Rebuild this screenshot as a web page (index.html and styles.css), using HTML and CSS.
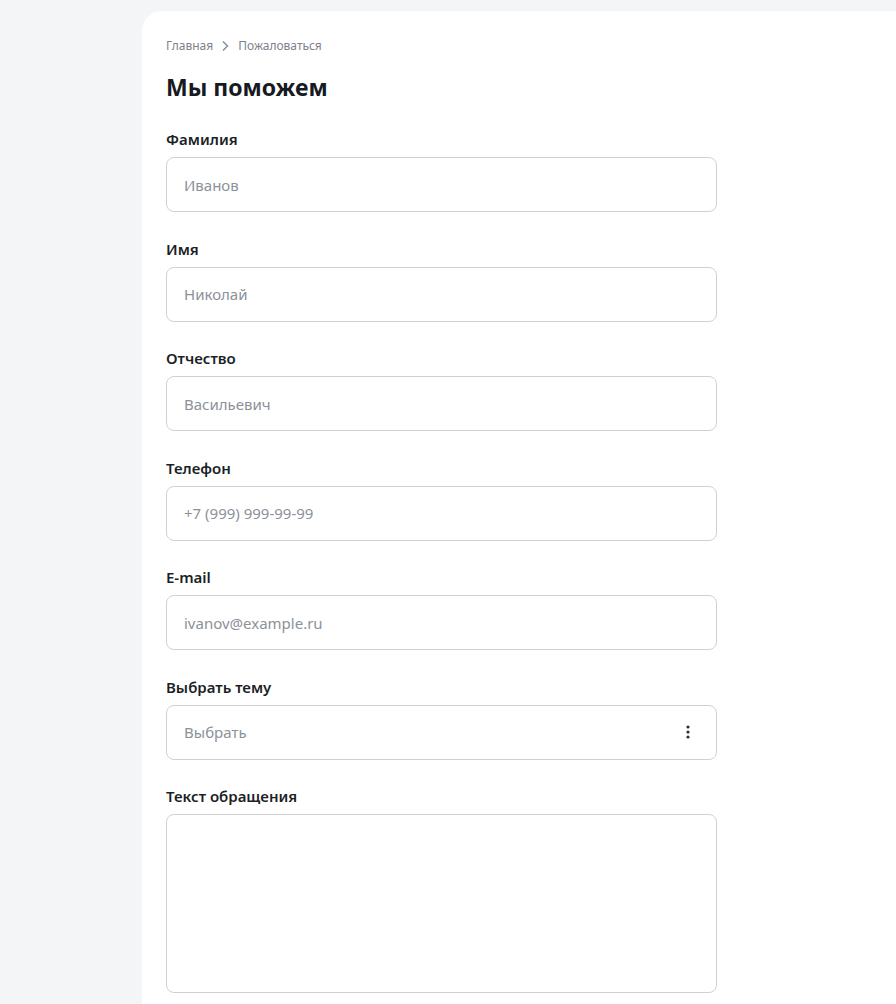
FILE: index.html
```html
<!DOCTYPE html>
<html lang="ru">
<head>
<meta charset="utf-8">
<title>Мы поможем</title>
<link rel="stylesheet" href="styles.css">
</head>
<body>
<main class="card">
  <nav class="crumbs">
    <a href="#" class="crumb">Главная</a>
    <svg class="crumb-sep" width="9" height="12" viewBox="0 0 9 12"><path d="M2 1.5l4.5 4.5-4.5 4.5" fill="none" stroke="#8a8f99" stroke-width="1.5"/></svg>
    <span class="crumb">Пожаловаться</span>
  </nav>
  <h1 class="title">Мы поможем</h1>
  <form class="form">
    <label class="field">
      <span class="label">Фамилия</span>
      <input class="input" type="text" placeholder="Иванов">
    </label>
    <label class="field">
      <span class="label">Имя</span>
      <input class="input" type="text" placeholder="Николай">
    </label>
    <label class="field">
      <span class="label">Отчество</span>
      <input class="input" type="text" placeholder="Васильевич">
    </label>
    <label class="field">
      <span class="label">Телефон</span>
      <input class="input" type="tel" placeholder="+7 (999) 999-99-99">
    </label>
    <label class="field">
      <span class="label">E-mail</span>
      <input class="input" type="email" placeholder="ivanov@example.ru">
    </label>
    <div class="field">
      <span class="label">Выбрать тему</span>
      <div class="input select">
        <span class="select-text">Выбрать</span>
        <svg width="4" height="16" viewBox="0 0 4 16"><circle cx="2" cy="3" r="1.6" fill="#2b2f38"/><circle cx="2" cy="8" r="1.6" fill="#2b2f38"/><circle cx="2" cy="13" r="1.6" fill="#2b2f38"/></svg>
      </div>
    </div>
    <label class="field">
      <span class="label">Текст обращения</span>
      <textarea class="input textarea"></textarea>
    </label>
  </form>
</main>
</body>
</html>
```
FILE: styles.css
```css
html, body {
  margin: 0;
  padding: 0;
}
body {
  background: #f4f5f7;
  font-family: "Noto Sans", "Open Sans", sans-serif;
  color: #1c1f26;
  padding: 11px 0 0 142px;
  height: 1004px;
  box-sizing: border-box;
  overflow: hidden;
}
.card {
  background: #fff;
  border-top-left-radius: 20px;
  padding: 27px 0 40px 24px;
  min-height: 1100px;
  box-sizing: border-box;
}
.crumbs {
  display: flex;
  align-items: center;
  gap: 8px;
  font-size: 12px;
  line-height: 16px;
  color: #7d828c;
}
.crumb {
  color: #7d828c;
  text-decoration: none;
}
.title {
  margin: 17px 0 0;
  font-size: 23px;
  line-height: 32px;
  font-weight: 700;
  color: #161a22;
}
.form {
  display: flex;
  flex-direction: column;
  gap: 27.5px;
  margin-top: 27px;
  width: 551px;
}
.field {
  display: flex;
  flex-direction: column;
  gap: 9px;
}
.label {
  font-size: 15px;
  line-height: 18px;
  font-weight: 600;
  color: #1c1f26;
}
.input {
  box-sizing: border-box;
  width: 551px;
  height: 55px;
  border: 1px solid #cfd1d5;
  border-radius: 8px;
  padding: 0 17px;
  font: inherit;
  font-size: 15px;
  color: #1c1f26;
  background: #fff;
  outline: none;
}
.input::placeholder {
  color: #8c919a;
}
.select {
  display: flex;
  align-items: center;
  justify-content: space-between;
  padding-right: 26px;
}
.select-text {
  color: #8c919a;
}
.textarea {
  height: 179px;
  resize: none;
  padding: 14px 17px;
}
```
